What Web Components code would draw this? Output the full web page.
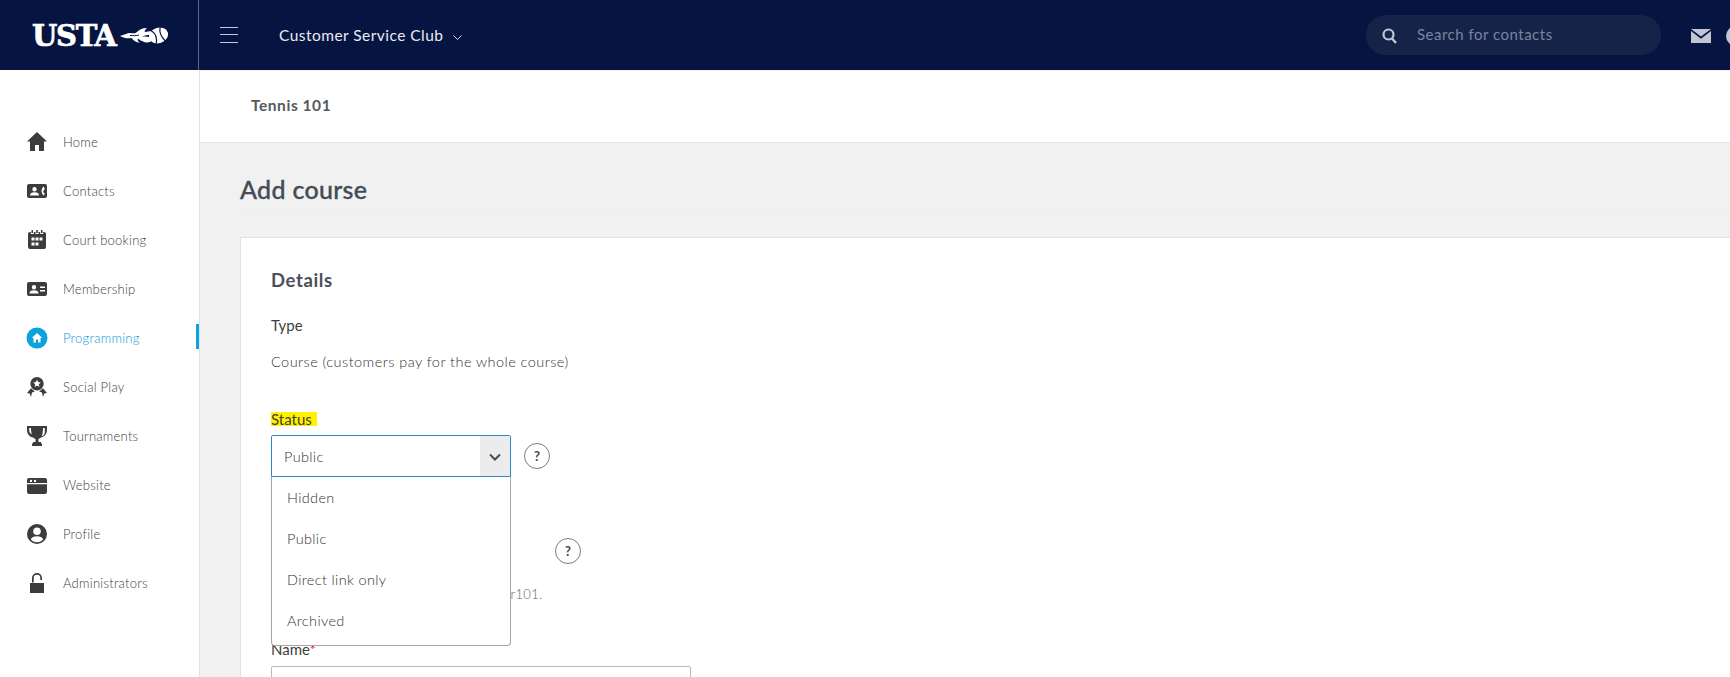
<!DOCTYPE html>
<html>
<head>
<meta charset="utf-8">
<title>Add course</title>
<style>
  html, body { margin: 0; height: 100%; overflow: hidden; }
  body { font-family: Lato, "Open Sans", sans-serif; color: #555; }
</style>
</head>
<body>
<usta-app>
  <usta-header slot="header"></usta-header>
  <side-nav slot="nav">
    <nav-item icon="home" label="Home"></nav-item>
    <nav-item icon="contacts" label="Contacts"></nav-item>
    <nav-item icon="calendar" label="Court booking"></nav-item>
    <nav-item icon="card" label="Membership"></nav-item>
    <nav-item icon="programming" label="Programming" active></nav-item>
    <nav-item icon="award" label="Social Play"></nav-item>
    <nav-item icon="trophy" label="Tournaments"></nav-item>
    <nav-item icon="website" label="Website"></nav-item>
    <nav-item icon="profile" label="Profile"></nav-item>
    <nav-item icon="lock" label="Administrators"></nav-item>
  </side-nav>
  <course-form></course-form>
</usta-app>

<script>
const ICONS = {
  home: '<path d="M10 0 0 9.500h3V19h5v-6h4v6h5V9.500h3z"/>',
  contacts: '<path fill-rule="evenodd" d="M2 3h16a2 2 0 0 1 2 2v10a2 2 0 0 1-2 2H2a2 2 0 0 1-2-2V5a2 2 0 0 1 2-2zm5.500 3a2.200 2.200 0 1 0 0 4.400 2.200 2.200 0 0 0 0-4.400zM3 14.500h9c0-2.300-1.500-3.300-4.500-3.300S3 12.200 3 14.500zM16.800 5.500c-3 1.800-3 7.200 0 9l1-1.800-1.300-1.300c-.3-.7-.3-1.100 0-1.800l1.300-1.300z"/>',
  calendar: '<path fill-rule="evenodd" d="M4.500 0H6v3H4.500zM14 0h1.500v3H14zM9.200 0h1.600v3H9.200zM3 2h.8v2h3V2h1.700v2h3V2h1.700v2h3V2h.8a2 2 0 0 1 2 2v13a2 2 0 0 1-2 2H3a2 2 0 0 1-2-2V4a2 2 0 0 1 2-2zm1.500 5.500v3h3v-3zm4 0v3h3v-3zm4 0v3h3v-3zm-8 5v3h3v-3zm4 0v3h3v-3z"/>',
  card: '<path fill-rule="evenodd" d="M2 3h16a2 2 0 0 1 2 2v10a2 2 0 0 1-2 2H2a2 2 0 0 1-2-2V5a2 2 0 0 1 2-2zm5 3a2.200 2.200 0 1 0 0 4.400A2.200 2.200 0 0 0 7 6zm-4.500 8.500h9c0-2.300-1.500-3.300-4.500-3.300s-4.500 1-4.500 3.300zM13 7.500V9h5V7.500zm0 3.500v1.500h5V11z"/>',
  award: '<path fill-rule="evenodd" d="M10 0a6.700 6.700 0 1 1 0 13.400A6.700 6.700 0 0 1 10 0zm0 2.600 1.100 2.500 2.700.3-2 1.800.6 2.700L10 8.500l-2.400 1.400.6-2.700-2-1.800 2.700-.3z"/><path d="M4 11.200 7.800 14.500 5 15.600 4 20 2.700 16.600 0 16zM16 11.200l-3.800 3.300 2.800 1.100L16 20l1.300-3.400L20 16z"/>',
  trophy: '<path fill-rule="evenodd" d="M0 0h20v4c0 4-2.500 7-6.500 7.700-.7.600-1.500 1-2 1.200V16h2.500v1.500H15V20H5v-2.500h1V16h2.500v-3.100c-.5-.2-1.300-.6-2-1.200C2.500 11 0 8 0 4zm2.200 2v2c0 2 1 3.700 2.900 4.500C4.400 8 4 5 4 2zm15.600 0H16c0 3-.4 6-1.100 8.500C16.800 9.700 17.800 8 17.800 6z"/>',
  website: '<path fill-rule="evenodd" d="M2 3h16a2 2 0 0 1 2 2v12a2 2 0 0 1-2 2H2a2 2 0 0 1-2-2V5a2 2 0 0 1 2-2zM0 8v1.300h20V8zm4-3.300a1.200 1.200 0 1 0 0 2.400 1.200 1.200 0 0 0 0-2.400zm4 0a1.200 1.200 0 1 0 0 2.400 1.200 1.200 0 0 0 0-2.400z"/>',
  profile: '<path fill-rule="evenodd" d="M10 0a10 10 0 1 1 0 20 10 10 0 0 1 0-20zm0 3.500a3.800 3.800 0 1 0 0 7.600 3.800 3.800 0 0 0 0-7.600zM3.800 15.200c1.400 1.900 3.600 3 6.200 3s4.800-1.100 6.200-3c-.8-2-3.200-3-6.200-3s-5.400 1-6.200 3z"/>',
  lock: '<path fill-rule="evenodd" d="M3 10h14v10H3zM5 9.500V5a5 5 0 0 1 10 0v2h-1.700V5a3.300 3.300 0 0 0-6.600 0v4.500z"/>'
};

class NavItem extends HTMLElement {
  constructor() {
    super();
    this.attachShadow({ mode: 'open' });
  }

  connectedCallback() {
    const icon = this.getAttribute('icon');
    const active = this.hasAttribute('active');
    const glyph = icon === 'programming'
      ? `<circle cx="10" cy="10" r="10.500" fill="#0ba3dc"/><path fill="#fff" d="M10 5 4.800 10h1.700v4.500h2.500v-3h2v3h2.500V10h1.700z"/>`
      : ICONS[icon];
    this.shadowRoot.innerHTML = `
    <style>
      :host { display: flex; align-items: center; height: 49px; position: relative; padding-left: 27px; }
      svg { width: 20px; height: 20px; flex: none; fill: #3c3c3c; overflow: visible; }
      span { margin-left: 16px; font-size: 13px; font-weight: 300; color: ${active ? '#0a9bd6' : '#404040'}; letter-spacing: .25px; }
      i { position: absolute; right: 0; top: 11px; height: 25px; width: 3px; background: #0ba3dc; display: ${active ? 'block' : 'none'}; }
    </style>
    <svg viewBox="0 0 20 20">${glyph}</svg><span>${this.getAttribute('label')}</span><i></i>
    `;
  }
}

class SideNav extends HTMLElement {
  constructor() {
    super();
    this.attachShadow({ mode: 'open' }).innerHTML = `
    <style>
      :host { display: block; width: 199px; height: 100%; background: #fff; border-right: 1px solid #dbe4ee; padding-top: 47px; }
    </style>
    <slot></slot>
    `;
  }
}

class UstaHeader extends HTMLElement {
  constructor() {
    super();
    this.attachShadow({ mode: 'open' }).innerHTML = `
    <style>
      :host { display: flex; align-items: center; height: 70px; background: #061442; color: #fff; overflow: hidden; }
      .brand { width: 199px; height: 100%; flex: none; border-right: 1px solid #5f6780; display: flex; align-items: center; padding-left: 32px; box-sizing: border-box; }
      .logo { font: bold 29px "DejaVu Serif", serif; letter-spacing: -1.300px; -webkit-text-stroke: .7px #fff; width: 88px; flex: none; line-height: 1; white-space: nowrap; margin-top: 3px; }
      .flame { width: 50px; height: 22px; flex: none; margin-top: 2px; }
      .burger { width: 18px; height: 16px; margin-left: 21px; flex: none; border-top: 1.500px solid #c5c8d4; border-bottom: 1.500px solid #c5c8d4; position: relative; box-sizing: border-box; }
      .burger::after { content: ""; position: absolute; left: 0; right: 0; top: 5.500px; height: 1.500px; background: #c5c8d4; }
      .club { margin-left: 41px; font-size: 15.500px; font-weight: 400; color: #e9ebf0; letter-spacing: .46px; flex: none; }
      .caret { width: 9px; height: 5px; margin-left: 10px; margin-top: 4px; flex: none; }
      .search { margin-left: auto; width: 295px; height: 40px; border-radius: 20px; background: #162349; display: flex; align-items: center; padding-left: 16px; box-sizing: border-box; flex: none; margin-top: -1px; }
      .search svg { width: 15px; height: 16px; flex: none; margin-top: 2px; }
      .search span { margin-left: 20px; color: #7a83a0; font-size: 15px; margin-top: -1px; letter-spacing: .5px; }
      .mail { width: 20px; height: 14px; margin-left: 30px; margin-top: 2px; flex: none; }
      .avatar { width: 20px; height: 20px; border-radius: 50%; background: #c2c5d2; margin-left: 15px; margin-right: -16px; flex: none; margin-top: 2px; }
    </style>
    <div class="brand">
      <span class="logo">USTA</span>
      <svg class="flame" viewBox="0 0 50 22">
        <path fill="#fff" d="M0 11C4 10 7 8 10 8c3 0 5 1 7-1 2-2 5-4 10-4-2 2-3 3-2 4 2 0 4-1 6-1l-1 4c-4 0-6 .5-8 2 3-.8 5-.5 8 .5l1 4c-4 2-9 .5-13-3-1 1.500 0 3 2 4.500-4-.5-6.500-2.500-8.500-5C8 13.500 4 13.500 0 11z"/>
        <path fill="none" stroke="#061442" stroke-width="1" d="M10 10.500c3 0 6 .5 9-.5"/>
        <g transform="rotate(-20 38.500 10.500)">
          <ellipse cx="38.500" cy="10.500" rx="9.800" ry="7.600" fill="#fff"/>
          <path fill="none" stroke="#061442" stroke-width="1.200" d="M33.500 3.500c3 4 3 9 0 14M43 3c-2.500 4-2.500 10 0 15"/>
        </g>
      </svg>
    </div>
    <div class="burger"></div>
    <span class="club">Customer Service Club</span>
    <svg class="caret" viewBox="0 0 9 5"><path fill="none" stroke="#d7dae3" stroke-width="1" d="M.5.500 4.500 4.500 8.500.500"/></svg>
    <div class="search">
      <svg viewBox="0 0 15 16"><circle cx="6.500" cy="6.500" r="5" fill="none" stroke="#c3c7d3" stroke-width="2.200"/><path d="m10 10.500 4 4.500" stroke="#c3c7d3" stroke-width="2.400"/></svg>
      <span>Search for contacts</span>
    </div>
    <svg class="mail" viewBox="0 0 20 14"><path fill="#c2c5d2" d="M0 0h20L10 7.500zM0 2v12h20V2L10 9.700z"/></svg>
    <div class="avatar"></div>
    `;
  }
}

class HelpIcon extends HTMLElement {
  constructor() {
    super();
    this.attachShadow({ mode: 'open' }).innerHTML = `
    <style>
      :host { display: flex; width: 26px; height: 26px; box-sizing: border-box; border: 1px solid #7d7d7d; border-radius: 50%; background: #fff; align-items: center; justify-content: center; font: bold 13px Lato, sans-serif; color: #444; flex: none; }
    </style>
    ?
    `;
  }
}

class FormSelect extends HTMLElement {
  constructor() {
    super();
    this.attachShadow({ mode: 'open' });
  }

  connectedCallback() {
    const options = JSON.parse(this.getAttribute('options'));
    this.shadowRoot.innerHTML = `
    <style>
      :host { display: block; width: 240px; position: relative; font-size: 14.500px; font-weight: 300; color: #333; letter-spacing: .35px; }
      .box { height: 42px; box-sizing: border-box; border: 1px solid #2a8bc4; border-radius: 2px 2px 0 0; display: flex; align-items: center; padding-left: 12px; background: #fff; }
      .value { flex: 1; }
      .arrow { width: 30px; height: 100%; background: #ececec; display: flex; align-items: center; justify-content: center; }
      .arrow svg { width: 12px; height: 8px; margin-top: 2px; }
      .menu { position: absolute; z-index: 2; left: 0; right: 0; top: 42px; height: 169px; box-sizing: border-box; background: #fff; border: 1px solid #a6a6a6; border-top: none; border-radius: 0 0 4px 4px; }
      .item { height: 41px; display: flex; align-items: center; padding-left: 15px; }
    </style>
    <div class="box">
      <span class="value">${this.getAttribute('value')}</span>
      <span class="arrow"><svg viewBox="0 0 12 8"><path fill="none" stroke="#444c57" stroke-width="2" d="m1 1.500 5 5 5-5"/></svg></span>
    </div>
    <div class="menu">
      ${options.map(el => `<div class="item">${el}</div>`).join('')}
    </div>
    `;
  }
}

class CourseForm extends HTMLElement {
  constructor() {
    super();
    this.attachShadow({ mode: 'open' }).innerHTML = `
    <style>
      :host { display: block; flex: 1; min-width: 0; background: #f1f1f1; overflow: hidden; }
      .crumb { height: 72px; margin-top: 1px; padding-bottom: 3px; box-sizing: border-box; background: #fff; border-bottom: 1px solid #e4e6ee; display: flex; align-items: center; padding-left: 51px; font-size: 15.500px; font-weight: 700; color: #555a61; letter-spacing: .55px; }
      h1 { margin: 0 0 0 40px; height: 73px; box-sizing: border-box; padding-top: 31px; font-size: 25px; font-weight: 500; line-height: 30px; color: #444c55; letter-spacing: .3px; -webkit-text-stroke: .35px #444c55; border-bottom: 1px solid #eeeeee; }
      .card { margin: 21px 0 0 40px; background: #fff; border: 1px solid #dde3ea; border-right: none; padding: 30px; }
      h2 { margin: 0; font-size: 18.500px; font-weight: 700; line-height: 24px; color: #4a5059; letter-spacing: .6px; }
      .label { font-size: 15px; line-height: 20px; color: #3f3f3f; }
      .type { margin-top: 23px; }
      .course { margin-top: 17px; font-size: 14.500px; font-weight: 300; line-height: 20px; color: #333; letter-spacing: .45px; }
      .status { margin-top: 37px; display: block; }
      mark { background: #fff200; color: #3f3f3f; padding-right: 5px; display: inline-block; height: 14px; line-height: 14px; }
      .row { display: flex; align-items: center; gap: 13px; margin-top: 6px; }
      .url { margin-top: 61px; height: 26px; display: flex; padding-left: 284px; }
      .hint { margin-top: 21px; padding-left: 230px; font-size: 13px; font-weight: 300; line-height: 18px; color: #666; letter-spacing: .3px; }
      .name { margin-top: 36px; line-height: 20px; }
      .name b { color: #e11; font-weight: 400; }
      .input { margin-top: 7px; width: 420px; height: 40px; box-sizing: border-box; border: 1px solid #b8b8b8; border-radius: 2px; background: #fff; }
    </style>
    <div class="crumb">Tennis 101</div>
    <h1>Add course</h1>
    <div class="card">
      <h2>Details</h2>
      <div class="label type">Type</div>
      <div class="course">Course (customers pay for the whole course)</div>
      <div class="label status"><mark>Status</mark></div>
      <div class="row">
        <form-select value="Public" options='["Hidden","Public","Direct link only","Archived"]'></form-select>
        <help-icon></help-icon>
      </div>
      <div class="url"><help-icon></help-icon></div>
      <div class="hint">Ur101.</div>
      <div class="label name">Name<b>*</b></div>
      <div class="input"></div>
    </div>
    `;
  }
}

class UstaApp extends HTMLElement {
  constructor() {
    super();
    this.attachShadow({ mode: 'open' }).innerHTML = `
    <style>
      :host { display: flex; flex-direction: column; height: 100vh; overflow: hidden; }
      .body { flex: 1; display: flex; min-height: 0; }
    </style>
    <slot name="header"></slot>
    <div class="body">
      <slot name="nav"></slot>
      <slot></slot>
    </div>
    `;
  }
}

customElements.define('nav-item', NavItem);
customElements.define('side-nav', SideNav);
customElements.define('usta-header', UstaHeader);
customElements.define('help-icon', HelpIcon);
customElements.define('form-select', FormSelect);
customElements.define('course-form', CourseForm);
customElements.define('usta-app', UstaApp);
</script>
</body>
</html>
